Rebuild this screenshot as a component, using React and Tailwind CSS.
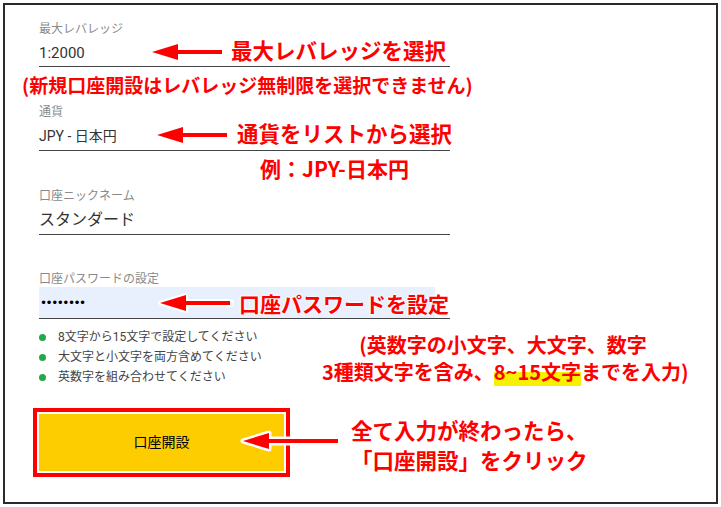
import React from "react";

const jp = "font-['Noto_Sans_CJK_JP','Noto_Sans',sans-serif]";
const form = "font-['Roboto','Noto_Sans_CJK_JP',sans-serif]";

// red arrow pointing left with a white halo
function Arrow({ len, halo = 4, className = "" }) {
  return (
    <svg className={`shrink-0 ${className}`} width={len + 12} height={24} viewBox={`0 0 ${len + 12} 24`}>
      <g stroke="#fff" strokeWidth={halo} strokeLinejoin="round" strokeLinecap="round" fill="#fff">
        <polygon points="6,12 32,4 32,20" />
        <line x1={28} y1={12} x2={len + 6} y2={12} strokeWidth={4 + halo} />
      </g>
      <polygon points="6,12 32,4 32,20" fill="#f00" />
      <line x1={28} y1={12} x2={len + 6} y2={12} stroke="#f00" strokeWidth={4} />
    </svg>
  );
}

function Label({ children, className = "" }) {
  return <div className={`h-[16px] text-[12px] leading-[16px] text-[#8a8a8a] ${className}`}>{children}</div>;
}

const callout = `shrink-0 whitespace-nowrap font-bold text-[#f00] ${jp}`;

export default function App() {
  const rules = [
    "8文字から15文字で設定してください",
    "大文字と小文字を両方含めてください",
    "英数字を組み合わせてください",
  ];

  return (
    <div className="w-[721px] h-[507px] bg-white p-[3px]">
      <div className="h-full border-2 border-[#2a2a2a] pl-[34px] pt-[16px]">
        <div className={`w-[411px] ${form}`}>
          {/* 最大レバレッジ */}
          <Label>最大レバレッジ</Label>
          <div className="h-[30px] flex items-center border-b border-[#444]">
            <span className="w-[107px] shrink-0 pt-[4px] text-[15px] text-[#333]">1:2000</span>
            <Arrow len={70} className="mt-[1px]" />
            <span className={`ml-[3px] mb-[3px] text-[21.5px] leading-[24px] ${callout}`}>最大レバレッジを選択</span>
          </div>
          <div className={`-ml-[17px] h-[37px] flex items-center ${callout} text-[19px]`}>
            (新規口座開設はレバレッジ無制限を選択できません)
          </div>

          {/* 通貨 */}
          <Label>通貨</Label>
          <div className="h-[31px] flex items-center border-b border-[#444]">
            <span className="w-[112px] shrink-0 pt-[2px] text-[14px] text-[#333]">JPY - 日本円</span>
            <Arrow len={70} />
            <div className={`ml-[4px] h-[24px] flex flex-col ${callout}`}>
              <span className="text-[21.5px] leading-[24px] -mt-[2px]">通貨をリストから選択</span>
              <span className="ml-[23px] mt-[11px] text-[21px] leading-[24px]">例：JPY-日本円</span>
            </div>
          </div>

          {/* ニックネーム */}
          <Label className="mt-[37px]">口座ニックネーム</Label>
          <div className="h-[31px] pt-[6px] border-b border-[#444] text-[16px] leading-[20px] text-[#333]">
            スタンダード
          </div>

          {/* パスワード */}
          <Label className="mt-[36px]">口座パスワードの設定</Label>
          <div className="h-[32px] border-b border-[#444]">
            <div className="w-[396px] h-full bg-[#e8f0fe] flex items-center">
              <span className="w-[115px] shrink-0 pl-[1px] text-[12px] tracking-[-1.5px] text-black font-['DejaVu_Sans',sans-serif]">
                ••••••••
              </span>
              <Arrow len={70} />
              <span className={`ml-[3px] text-[21px] leading-[24px] [text-shadow:0_0_2px_#fff,0_0_2px_#fff,0_0_3px_#fff] ${callout}`}>
                口座パスワードを設定
              </span>
            </div>
          </div>

          <div className="mt-[8px] flex">
            <div className="w-[283px] shrink-0">
              {rules.map((r) => (
                <div key={r} className="h-[20px] flex items-center text-[12px] text-[#444]">
                  <span className="w-[7px] h-[7px] rounded-full bg-[#22a84a]" />
                  <span className="ml-[12px]">{r}</span>
                </div>
              ))}
            </div>
            <div className={`mt-[4px] w-[362px] text-center text-[20px] leading-[27px] ${callout}`}>
              <div>(英数字の小文字、大文字、数字</div>
              <div>
                3種類文字を含み、
                <span className="bg-[linear-gradient(transparent_50%,#f7f000_50%)]">8~15文字</span>
                までを入力)
              </div>
            </div>
          </div>

          {/* 口座開設 */}
          <div className="mt-[21px] -ml-[6px] flex items-center">
            <div className="w-[257px] h-[69px] shrink-0 border-4 border-[#f00] bg-white p-[2px]">
              <div className="h-full bg-[#fdcd00] flex items-center justify-center text-[14px] text-black">
                口座開設
              </div>
            </div>
            <Arrow len={95} halo={5} className="-ml-[53px] -mt-[4px]" />
            <div className={`ml-[7px] pt-[5px] text-[21.5px] leading-[30px] ${callout}`}>
              <div>全て入力が終わったら、</div>
              <div>「口座開設」をクリック</div>
            </div>
          </div>
        </div>
      </div>
    </div>
  );
}
